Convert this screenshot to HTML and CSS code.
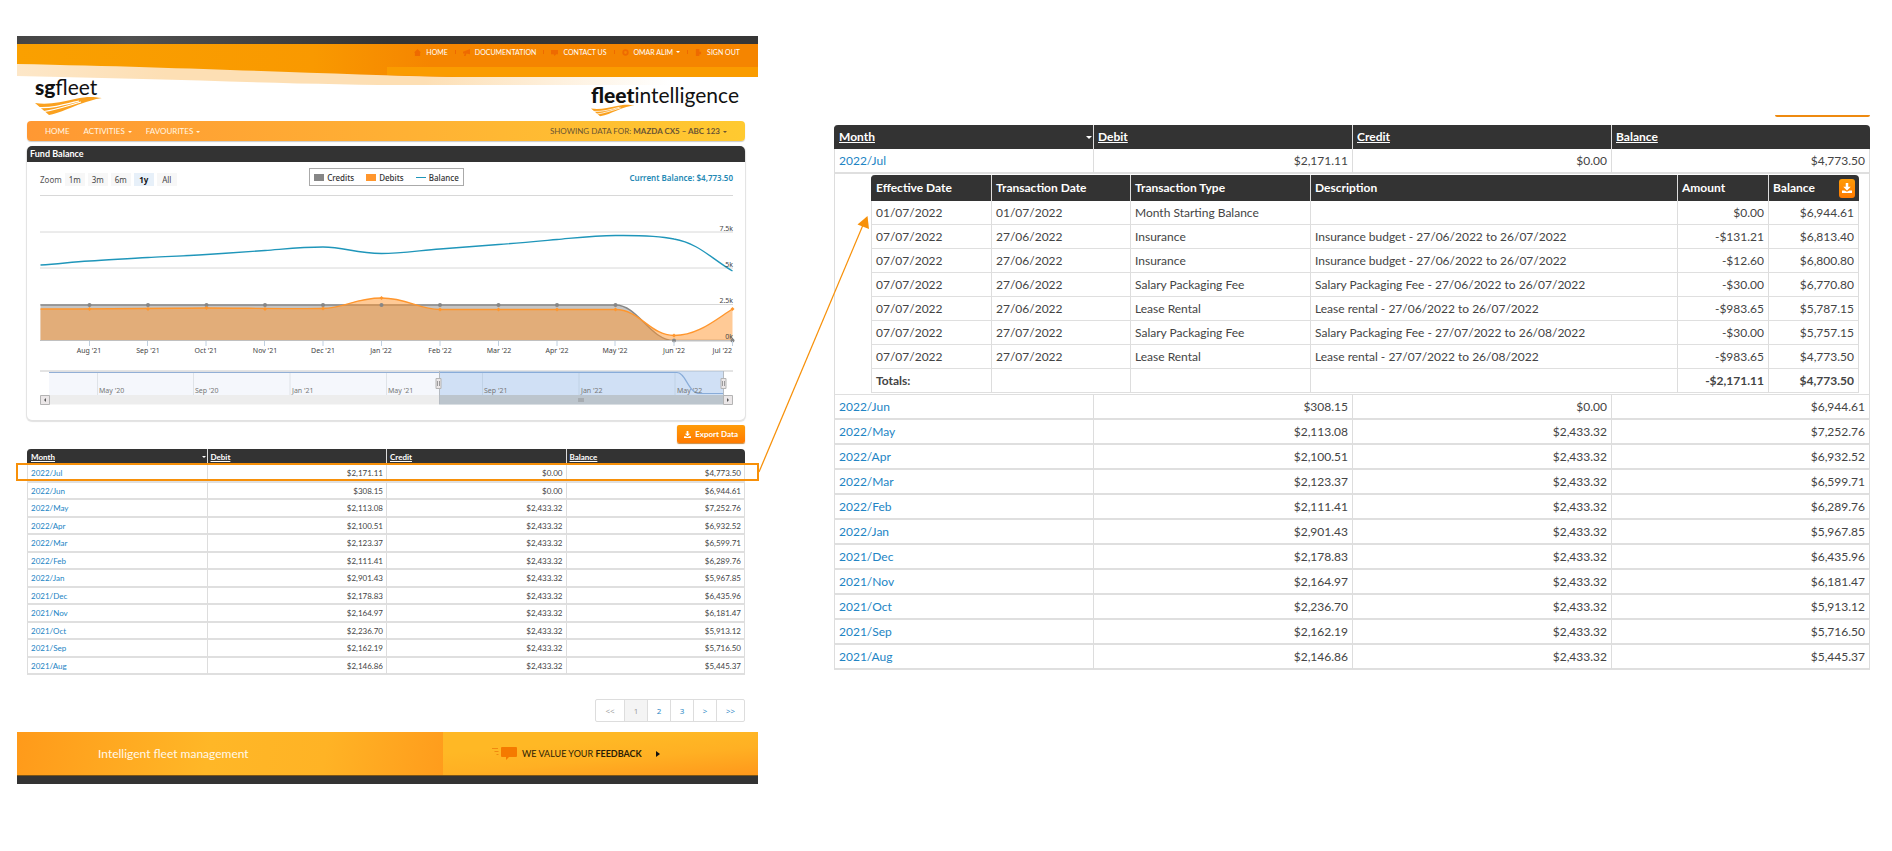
FILE: index.html
```html
<!DOCTYPE html>
<html lang="en">
<head>
<meta charset="utf-8">
<title>Fleet Intelligence - Fund Balance</title>
<link rel="stylesheet" href="styles.css">
</head>
<body>
<main class="board">
  <section class="site">
    <header class="header">
      <svg class="waves" viewBox="0 0 741 50" preserveAspectRatio="none" aria-hidden="true">
        <defs>
          <linearGradient id="dark"><stop offset="0" stop-color="#454545"/><stop offset=".15" stop-color="#505050"/><stop offset=".5" stop-color="#343434"/><stop offset="1" stop-color="#363636"/></linearGradient>
          <linearGradient id="orange" gradientUnits="userSpaceOnUse" x1="0" y1="0" x2="741" y2="0"><stop offset="0" stop-color="#faa000"/><stop offset=".4" stop-color="#f99900"/><stop offset=".56" stop-color="#f58500"/><stop offset="1" stop-color="#f58500"/></linearGradient>
          <linearGradient id="cream" gradientUnits="userSpaceOnUse" x1="0" y1="0" x2="741" y2="0"><stop offset="0" stop-color="#fde7c8"/><stop offset=".2" stop-color="#fddfb4"/><stop offset=".55" stop-color="#fddfb4"/><stop offset=".88" stop-color="#fff"/></linearGradient>
        </defs>
        <path d="M0 27H741V49H400C290 49 160 43 0 40Z" fill="url(#cream)"/>
        <path d="M0 8H741V41H440C320 39 200 32 0 28Z" fill="url(#orange)"/>
        <path d="M370 31H741V41H440Q400 40 370 39Z" fill="#fa9c00"/>
        <path d="M0 0H741V8H0Z" fill="url(#dark)"/>
      </svg>
      <nav class="topnav" aria-label="Account">
        <a href="#"><svg class="ico" viewBox="0 0 8 8"><path d="M4 0L0 4h1v4h6V4h1z"/></svg>HOME</a>
        <a href="#"><svg class="ico" viewBox="0 0 8 8"><path d="M0 3l3-1 5-2v6L4 5 3 8H1l1-3H0z"/></svg>DOCUMENTATION</a>
        <a href="#"><svg class="ico" viewBox="0 0 8 8"><path d="M0 1h8v5H6L4 8 3 6H0z"/></svg>CONTACT US</a>
        <a href="#"><svg class="ico" viewBox="0 0 8 8"><circle cx="4" cy="4" r="2.6" fill="none" stroke="#ee6a00" stroke-width="2"/></svg>OMAR ALIM <i class="caret"></i></a>
        <a href="#"><svg class="ico" viewBox="0 0 8 8"><path d="M1 0h4v3h2v3H5v2H1z"/></svg>SIGN OUT</a>
      </nav>
      <div class="logos">
        <div class="logo"><div class="word"><b>sg</b>fleet</div>
          <svg class="swoosh" viewBox="0 0 68 20" aria-hidden="true"><path d="M0 7C14 9 26 6 40 3S58 1 67 2C60 3 50 6 40 10S24 17 14 19Z" fill="#faa11f"/><path d="M4 11.500C18 12 28 9 44 5M9 15.500C20 14 32 10 46 6" fill="none" stroke="#fff" stroke-width="1.200"/></svg>
        </div>
        <div class="logo logo-fi"><div class="word"><b>fleet</b>intelligence</div>
          <svg class="swoosh" viewBox="0 0 68 20" aria-hidden="true"><path d="M0 7C14 9 26 6 40 3S58 1 67 2C60 3 50 6 40 10S24 17 14 19Z" fill="#faa11f"/><path d="M4 11.500C18 12 28 9 44 5M9 15.500C20 14 32 10 46 6" fill="none" stroke="#fff" stroke-width="1.200"/></svg>
        </div>
      </div>
    </header>

    <div class="content">
      <nav class="menubar" aria-label="Main">
        <a href="#">HOME</a>
        <a href="#">ACTIVITIES <i class="caret"></i></a>
        <a href="#">FAVOURITES <i class="caret"></i></a>
        <a class="vehicle" href="#">SHOWING DATA FOR: <b>MAZDA CX5 – ABC 123</b> <i class="caret"></i></a>
      </nav>

      <section class="panel">
        <h2 class="panel-title">Fund Balance</h2>
        <div class="tools">
          <div class="zoom"><span>Zoom</span><button>1m</button><button>3m</button><button>6m</button><button class="on">1y</button><button>All</button></div>
          <div class="legend"><span><i class="sw gray"></i>Credits</span><span><i class="sw org"></i>Debits</span><span><i class="sw line"></i>Balance</span></div>
          <div class="current">Current Balance: $4,773.50</div>
        </div>
        <svg class="chart" viewBox="27 190 718 220" role="img" aria-label="Credits, debits and balance by month">
          <path d="M40 195.500H733M40 232H733M40 268H733M40 304.500H733" stroke="#d8d8d8"/>
          <path d="M40.500 305H615.500C638 305 650 340.500 674 340.500H40.500Z" fill="#8b8b8b" fill-opacity=".5"/>
          <path d="M40.500 305H615.500C638 305 650 340.500 674 340.500H732.500" fill="none" stroke="#868686" stroke-width="1.400"/>
          <path d="M40.500 309C150 309 180 308 206.500 308S300 309 323 308.500C345 308 355 298 381.500 298S418 309.500 440 309.500H615.500C640 309.500 650 335.500 674 335.500S715 320 732.500 309V340.500H40.500Z" fill="#ff962d" fill-opacity=".5"/>
          <path d="M40.500 309C150 309 180 308 206.500 308S300 309 323 308.500C345 308 355 298 381.500 298S418 309.500 440 309.500H615.500C640 309.500 650 335.500 674 335.500S715 320 732.500 309" fill="none" stroke="#ff962d" stroke-width="1.400"/>
          <path d="M40 340.500H733" stroke="#c0c0c0"/>
          <g fill="#868686"><circle cx="89.500" cy="305" r="2"/><circle cx="148" cy="305" r="2"/><circle cx="206.500" cy="305" r="2"/><circle cx="265" cy="305" r="2"/><circle cx="323" cy="305" r="2"/><circle cx="381.500" cy="305" r="2"/><circle cx="440" cy="305" r="2"/><circle cx="498.500" cy="305" r="2"/><circle cx="557" cy="305" r="2"/><circle cx="615.500" cy="305" r="2"/><circle cx="674" cy="340.500" r="2"/><circle cx="732.500" cy="340.500" r="2"/></g>
          <path d="M89.500 307l2 2-2 2-2-2zM148 307l2 2-2 2-2-2zM206.500 306l2 2-2 2-2-2zM265 307l2 2-2 2-2-2zM323 306.500l2 2-2 2-2-2zM381.500 296l2 2-2 2-2-2zM440 307.500l2 2-2 2-2-2zM498.500 307.500l2 2-2 2-2-2zM557 307.500l2 2-2 2-2-2zM615.500 307.500l2 2-2 2-2-2zM674 333.500l2 2-2 2-2-2zM732.500 307l2 2-2 2-2-2z" fill="#ff962d"/>
          <path d="M40.500 265C60 264 70 262 89.500 261S128 258.500 148 257.500S187 255.700 206.500 254.500S245 252 265 250.500S302 247 323 247C345 247 355 253.500 381.500 253.500C400 253.500 420 250.500 440 249S478 246 498.500 244.500S537 241.300 557 239.500S595 235.500 615.500 235.500S655 235 674 239C698 243 712 259 732.500 271" fill="none" stroke="#1f96ba" stroke-width="1.400"/>
          <path d="M89.500 341v5M147.500 341v5M206 341v5M264.500 341v5M323 341v5M381.500 341v5M440 341v5M498.500 341v5M557 341v5M615 341v5M674 341v5M732.500 341v5" stroke="#c0d0e0"/>
          <g class="lbl" text-anchor="middle"><text x="89" y="353">Aug '21</text><text x="148" y="353">Sep '21</text><text x="206" y="353">Oct '21</text><text x="265" y="353">Nov '21</text><text x="323" y="353">Dec '21</text><text x="381" y="353">Jan '22</text><text x="440" y="353">Feb '22</text><text x="499" y="353">Mar '22</text><text x="557" y="353">Apr '22</text><text x="615" y="353">May '22</text><text x="674" y="353">Jun '22</text></g>
          <g class="lbl" text-anchor="end"><text x="732" y="353">Jul '22</text><text x="733" y="231">7.5k</text><text x="733" y="267">5k</text><text x="733" y="303">2.5k</text><text x="733" y="339">0k</text></g>

          <path d="M49 371H724V395H49Z" fill="#f5f7fc"/>
          <path d="M40 371H733" stroke="#c8c8c8"/>
          <path d="M97.500 372v23M193.500 372v23M290 372v23M386.500 372v23M482.500 372v23M579 372v23M675 372v23" stroke="#dfe3e8"/>
          <path d="M49 372.500H677C686 372.500 688 393.500 700 393.500H723" fill="none" stroke="#92afd6" stroke-width="1.200"/>
          <path d="M439 371H723.500V395H439Z" fill="#6ea6e4" fill-opacity=".28"/>
          <g class="lbl faint"><text x="99" y="393">May '20</text><text x="195" y="393">Sep '20</text><text x="292" y="393">Jan '21</text><text x="388" y="393">May '21</text><text x="484" y="393">Sep '21</text><text x="581" y="393">Jan '22</text><text x="677" y="393">May '22</text></g>
          <path d="M49 395H724V404.500H49Z" fill="#ededed"/>
          <path d="M439 395H723.500V404.500H439Z" fill="#bcc5cd"/>
          <path d="M439.500 371V404M723.500 371V404" stroke="#b5bbc2"/>
          <g fill="#ebe7e8" stroke="#b4b4b4"><path d="M40.500 395.500h9v9h-9zM723.500 395.500h9v9h-9zM436 378.500h5v10h-5zM721 378.500h5v10h-5z"/></g>
          <path d="M46 398v4l-2-2zM727 398v4l2-2z" fill="#555"/>
          <path d="M437.500 381v5M439.500 381v5M722.500 381v5M724.500 381v5M579 398v4M581 398v4M583 398v4" stroke="#888" stroke-width=".8"/>
        </svg>
      </section>

      <div class="actions"><button class="export"><svg viewBox="0 0 8 8"><path d="M3 0h2v3h2L4 6 1 3h2zM0 6h2l2 1 2-1h2v2H0z"/></svg>Export Data</button></div>

      <div class="tablebox">
      <table class="grid small">
        <thead><tr><th><div class="sort"><a href="#">Month</a><i class="caret"></i></div></th><th><a href="#">Debit</a></th><th><a href="#">Credit</a></th><th><a href="#">Balance</a></th></tr></thead>
        <tbody>
          <tr><td><a href="#">2022/Jul</a></td><td>$2,171.11</td><td>$0.00</td><td>$4,773.50</td></tr>
          <tr><td><a href="#">2022/Jun</a></td><td>$308.15</td><td>$0.00</td><td>$6,944.61</td></tr>
          <tr><td><a href="#">2022/May</a></td><td>$2,113.08</td><td>$2,433.32</td><td>$7,252.76</td></tr>
          <tr><td><a href="#">2022/Apr</a></td><td>$2,100.51</td><td>$2,433.32</td><td>$6,932.52</td></tr>
          <tr><td><a href="#">2022/Mar</a></td><td>$2,123.37</td><td>$2,433.32</td><td>$6,599.71</td></tr>
          <tr><td><a href="#">2022/Feb</a></td><td>$2,111.41</td><td>$2,433.32</td><td>$6,289.76</td></tr>
          <tr><td><a href="#">2022/Jan</a></td><td>$2,901.43</td><td>$2,433.32</td><td>$5,967.85</td></tr>
          <tr><td><a href="#">2021/Dec</a></td><td>$2,178.83</td><td>$2,433.32</td><td>$6,435.96</td></tr>
          <tr><td><a href="#">2021/Nov</a></td><td>$2,164.97</td><td>$2,433.32</td><td>$6,181.47</td></tr>
          <tr><td><a href="#">2021/Oct</a></td><td>$2,236.70</td><td>$2,433.32</td><td>$5,913.12</td></tr>
          <tr><td><a href="#">2021/Sep</a></td><td>$2,162.19</td><td>$2,433.32</td><td>$5,716.50</td></tr>
          <tr><td><a href="#">2021/Aug</a></td><td>$2,146.86</td><td>$2,433.32</td><td>$5,445.37</td></tr>
        </tbody>
      </table>
      <div class="highlight"></div>
      </div>

      <nav class="pager" aria-label="Pages"><a class="off wide" href="#">&lt;&lt;</a><a class="off here" href="#">1</a><a href="#">2</a><a href="#">3</a><a href="#">&gt;</a><a class="wide" href="#">&gt;&gt;</a></nav>
    </div>

    <footer class="footer">
      <div class="tag">Intelligent fleet management</div>
      <a class="feedback" href="#"><svg viewBox="0 0 25 13"><path d="M10 0h14q1 0 1 1v8q0 1-1 1h-7l-3 3v-3h-4q-1 0-1-1V1q0-1 1-1z" fill="#f57a00"/><path d="M0 1.500h6M2.500 4.500h4M4.500 7.500h2" stroke="#f08a10"/></svg><span>WE VALUE YOUR <b>FEEDBACK</b></span><i class="play"></i></a>
    </footer>
    <div class="base"></div>
    <svg class="arrow" viewBox="0 0 112 260" aria-hidden="true"><path d="M1 257L105 10" stroke="#f79009" stroke-width="1.200"/><path d="M109.500 1L99.500 9.500 111 14z" fill="#f79009"/></svg>
  </section>

  <section class="detail">
    <div class="sliver"></div>
    <table class="grid large">
      <thead><tr><th><div class="sort"><a href="#">Month</a><i class="caret"></i></div></th><th><a href="#">Debit</a></th><th><a href="#">Credit</a></th><th><a href="#">Balance</a></th></tr></thead>
      <tbody>
        <tr><td><a href="#">2022/Jul</a></td><td>$2,171.11</td><td>$0.00</td><td>$4,773.50</td></tr>
        <tr><td class="nest" colspan="4">
          <table class="inner">
            <colgroup><col class="c1"><col class="c2"><col class="c3"><col><col class="c5"><col class="c5"></colgroup>
            <thead><tr><th>Effective Date</th><th>Transaction Date</th><th>Transaction Type</th><th>Description</th><th>Amount</th><th><div class="sort">Balance<button class="dl" aria-label="Download"><svg viewBox="0 0 8 8"><path d="M3 0h2v3h2L4 6 1 3h2zM0 6h2l2 1 2-1h2v2H0z"/></svg></button></div></th></tr></thead>
            <tbody>
              <tr><td>01/07/2022</td><td>01/07/2022</td><td>Month Starting Balance</td><td></td><td>$0.00</td><td>$6,944.61</td></tr>
              <tr><td>07/07/2022</td><td>27/06/2022</td><td>Insurance</td><td>Insurance budget - 27/06/2022 to 26/07/2022</td><td>-$131.21</td><td>$6,813.40</td></tr>
              <tr><td>07/07/2022</td><td>27/06/2022</td><td>Insurance</td><td>Insurance budget - 27/06/2022 to 26/07/2022</td><td>-$12.60</td><td>$6,800.80</td></tr>
              <tr><td>07/07/2022</td><td>27/06/2022</td><td>Salary Packaging Fee</td><td>Salary Packaging Fee - 27/06/2022 to 26/07/2022</td><td>-$30.00</td><td>$6,770.80</td></tr>
              <tr><td>07/07/2022</td><td>27/06/2022</td><td>Lease Rental</td><td>Lease rental - 27/06/2022 to 26/07/2022</td><td>-$983.65</td><td>$5,787.15</td></tr>
              <tr><td>07/07/2022</td><td>27/07/2022</td><td>Salary Packaging Fee</td><td>Salary Packaging Fee - 27/07/2022 to 26/08/2022</td><td>-$30.00</td><td>$5,757.15</td></tr>
              <tr><td>07/07/2022</td><td>27/07/2022</td><td>Lease Rental</td><td>Lease rental - 27/07/2022 to 26/08/2022</td><td>-$983.65</td><td>$4,773.50</td></tr>
              <tr class="totals"><td>Totals:</td><td></td><td></td><td></td><td>-$2,171.11</td><td>$4,773.50</td></tr>
            </tbody>
          </table>
        </td></tr>
        <tr><td><a href="#">2022/Jun</a></td><td>$308.15</td><td>$0.00</td><td>$6,944.61</td></tr>
        <tr><td><a href="#">2022/May</a></td><td>$2,113.08</td><td>$2,433.32</td><td>$7,252.76</td></tr>
        <tr><td><a href="#">2022/Apr</a></td><td>$2,100.51</td><td>$2,433.32</td><td>$6,932.52</td></tr>
        <tr><td><a href="#">2022/Mar</a></td><td>$2,123.37</td><td>$2,433.32</td><td>$6,599.71</td></tr>
        <tr><td><a href="#">2022/Feb</a></td><td>$2,111.41</td><td>$2,433.32</td><td>$6,289.76</td></tr>
        <tr><td><a href="#">2022/Jan</a></td><td>$2,901.43</td><td>$2,433.32</td><td>$5,967.85</td></tr>
        <tr><td><a href="#">2021/Dec</a></td><td>$2,178.83</td><td>$2,433.32</td><td>$6,435.96</td></tr>
        <tr><td><a href="#">2021/Nov</a></td><td>$2,164.97</td><td>$2,433.32</td><td>$6,181.47</td></tr>
        <tr><td><a href="#">2021/Oct</a></td><td>$2,236.70</td><td>$2,433.32</td><td>$5,913.12</td></tr>
        <tr><td><a href="#">2021/Sep</a></td><td>$2,162.19</td><td>$2,433.32</td><td>$5,716.50</td></tr>
        <tr><td><a href="#">2021/Aug</a></td><td>$2,146.86</td><td>$2,433.32</td><td>$5,445.37</td></tr>
      </tbody>
    </table>
  </section>
</main>
</body>
</html>
```
FILE: styles.css
```css
* { box-sizing: border-box; }
body { margin: 0; background: #fff; color: #444; font-family: Lato, "Open Sans", sans-serif; font-size: 12px; }
a { color: inherit; text-decoration: none; }
button { font: inherit; color: inherit; border: 0; margin: 0; padding: 0; }
.board { display: grid; grid-template-columns: 741fr 1036fr; gap: 76px; padding: 36px 22px 36px 17px; align-items: start; }
.site { position: relative; font-size: 8px; }
.caret { display: inline-block; border: 2px solid transparent; border-top-color: currentColor; border-bottom: 0; vertical-align: middle; margin-left: 1px; }

.header { position: relative; height: 85px; padding-top: 8px; }
.waves { position: absolute; inset: 0 0 auto; width: 100%; height: 50px; }
.topnav { position: relative; display: flex; justify-content: flex-end; gap: 7px; padding-right: 18px; line-height: 16px; font-size: 7px; color: #fff; }
.topnav a { display: flex; align-items: center; }
.topnav a + a::before { content: ""; width: 1px; height: 4px; margin-right: 7px; background: #ee6a00; }
.topnav .caret { margin-left: 3px; }
.ico { width: 7px; height: 7px; fill: #ee6a00; margin-right: 5px; }
.logos { position: relative; display: flex; justify-content: space-between; padding: 12px 19px 0 18px; }
.logo { position: relative; height: 40px; color: #111; }
.word { font-size: 21px; line-height: 30px; }
.word b { font-weight: 900; }
.logo-fi { padding-top: 8px; }
.swoosh { position: absolute; left: 0; top: 24px; width: 68px; height: 20px; }
.logo-fi .swoosh { top: 32px; width: 44px; height: 13px; }

.content { padding: 0 13px 0 10px; }
.menubar { display: flex; align-items: center; height: 20px; padding: 0 18px; gap: 14px; border-radius: 4px; background: linear-gradient(90deg, #ff9833, #ffb234 55%, #ffca30); color: #fff6e4; box-shadow: 0 1px 1px #ccc; font-size: 8px; }
.vehicle { margin-left: auto; color: #6a5434; }
.panel { margin-top: 5px; padding-bottom: 10px; border-radius: 5px; box-shadow: 0 1px 1px 1px #e2e2e2; }
.panel-title { margin: 0; padding: 0 3px; background: #333; color: #fff; border-radius: 5px 5px 0 0; font-size: 9px; line-height: 16px; font-weight: 700; }
.tools { display: grid; grid-template-columns: 1fr auto 1fr; align-items: center; height: 28px; padding: 2px 12px 0 13px; font-family: "Noto Sans", "Open Sans", sans-serif; }
.zoom { display: flex; align-items: center; gap: 3px; padding-top: 4px; color: #555; }
.zoom button { width: 20px; height: 13px; line-height: 13px; background: #f7f7f7; color: #444; font-size: 8px; }
.zoom .on { background: #e7f0f9; color: #111; font-weight: 700; }
.legend { display: flex; align-items: center; gap: 12px; height: 18px; padding: 0 4px; border: 1px solid #aaa; color: #333; font-weight: 500; }
.legend span { display: flex; align-items: center; gap: 3px; }
.sw { width: 10px; height: 7px; }
.gray { background: #868686; }
.org { background: #ff962d; }
.line { height: 1px; background: #1f96ba; }
.current { text-align: right; color: #2388b4; font-size: 8px; font-weight: 600; }
.chart { display: block; width: 100%; }
.lbl { font-family: "Noto Sans", "Open Sans", sans-serif; font-size: 7px; fill: #444; }
.faint { fill: #777; }

.actions { display: flex; justify-content: flex-end; margin: 5px 0 6px; }
.export { display: flex; align-items: center; gap: 4px; height: 18px; padding: 0 7px; border-radius: 2px; background: linear-gradient(#ff9c08, #ff7a00); color: #fff; font-size: 8px; font-weight: 700; box-shadow: 0 1px 1px #c98a40; cursor: pointer; }
.export svg { width: 7px; height: 7px; fill: #fff; }

.tablebox { position: relative; }
.highlight { position: absolute; left: -11px; right: -14px; top: 14px; height: 18px; border: 2px solid #f79009; }
table { width: 100%; border-collapse: separate; border-spacing: 0; table-layout: fixed; }
th { background: #333; color: #fff; text-align: left; font-weight: 700; border-left: 1px solid #ddd; }
th a { text-decoration: underline; }
td { border-left: 1px solid #ddd; border-bottom: 2px solid #dfdfdf; text-align: right; }
th:first-child { border-left-color: #333; border-top-left-radius: 4px; }
th:last-child { border-top-right-radius: 4px; }
td:last-child { border-right: 1px solid #ddd; }
td:first-child { text-align: left; }
td a { color: #2284c4; }
.sort { display: flex; justify-content: space-between; align-items: center; }
.small th, .small td { padding: 0 3px; height: 17px; line-height: 12px; font-size: 8px; }
.small th { height: 16px; }
.small .caret { margin-right: -2px; }
.small tbody tr:nth-child(odd) td { height: 18px; }

.pager { display: flex; width: max-content; margin: 24px 0 10px auto; border: 1px solid #ddd; border-radius: 2px; color: #2284c4; font-family: "Open Sans", sans-serif; }
.pager a { width: 23px; line-height: 21px; text-align: center; border-left: 1px solid #ddd; }
.pager a:first-child { border-left: 0; }
.pager .wide { width: 28px; }
.pager .off { color: #999; }
.pager .here { background: #f4f4f4; }

.footer { display: grid; grid-template-columns: 426fr 315fr; height: 43px; line-height: 43px; }
.tag { padding-left: 81px; color: #fff8e8; font-size: 12px; background: linear-gradient(100deg, #ff9a1a, #ffb727 45%, #ffb325 72%, #ff9c1c); }
.feedback { display: flex; align-items: center; padding-left: 49px; color: #2b1c05; font-size: 9px; background: linear-gradient(175deg, #ffb825 30%, #ffb023 60%, #ff981b); }
.feedback svg { width: 25px; height: 13px; margin-right: 5px; }
.play { border: 3px solid transparent; border-left: 4px solid #111; border-right: 0; margin-left: 14px; }
.base { height: 9px; background: #333; border-top: 1px solid #7a5418; }
.arrow { position: absolute; left: 100%; top: 179px; width: 112px; height: 260px; }

.detail { padding-top: 79px; }
.sliver { width: 95px; height: 2px; margin: 0 0 8px auto; background: #ee8a10; border-radius: 0 0 2px 2px; }
.large th, .large td { height: 25px; padding: 0 4px; line-height: 16px; font-size: 12px; }
.large th { height: 24px; }
.large > thead .caret { margin-right: -3px; border-width: 3px 3px 0; }
.large .nest { height: auto; padding: 1px 10px 1px 36px; border-bottom-width: 1px; }
.large .inner th { height: 26px; }
.large .inner td { height: 24px; border-bottom-width: 1px; }
.inner td:nth-child(-n+4) { text-align: left; }
.c1 { width: 120px; }
.c2 { width: 139px; }
.c3 { width: 180px; }
.c5 { width: 91px; }
.large .totals td { font-weight: 700; }
.dl { width: 16px; height: 19px; border-radius: 3px; background: linear-gradient(#ff9c08, #ff7a00); cursor: pointer; }
.dl svg { display: block; width: 10px; height: 10px; margin: auto; fill: #fff; }
```
